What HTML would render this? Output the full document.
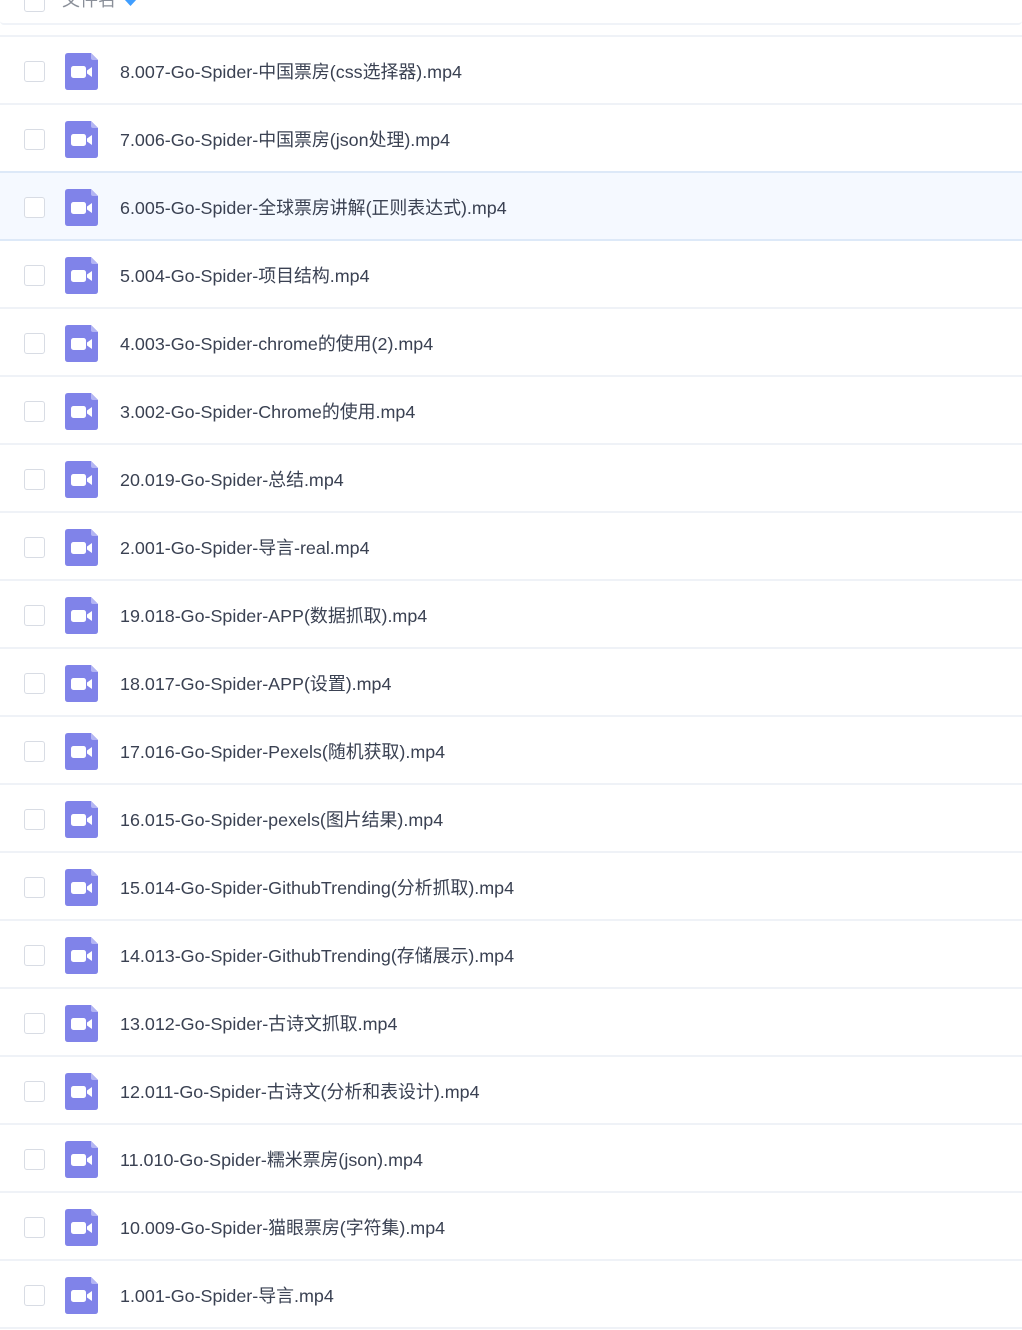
<!DOCTYPE html>
<html><head><meta charset="utf-8"><style>
*{margin:0;padding:0;box-sizing:border-box}
body{width:1022px;height:1330px;background:#fff;position:relative;overflow:hidden;font-family:"Liberation Sans","Noto Sans CJK SC",sans-serif}
.hdr{position:absolute;left:0;top:-40px;width:1022px;height:65px;background:#fff;border-bottom:2px solid #f0f3f8;border-radius:0 0 4px 4px}
.line{position:absolute;left:0;width:1022px;height:2px;background:#f1f4f9}
.row{position:absolute;left:0;width:1022px;height:68px}
.hl{background:#f5f9ff}
.cb{position:absolute;left:24px;top:25px;width:21px;height:21px;border:1.5px solid #d8dce4;border-radius:3px;background:#fff}
.ic{position:absolute;left:65px;top:17px}
.tx{position:absolute;left:120px;top:24px;font-size:17.9px;color:#3a4152;line-height:24px;white-space:nowrap}
</style></head><body>
<div class="hdr"><div class="cb" style="top:31px"></div><div style="position:absolute;left:62px;top:26px;font-size:18px;color:#8a8f99">文件名</div><svg style="position:absolute;left:124px;top:39px" width="13" height="7"><path d="M0 0H13L6.5 7Z" fill="#409eff"/></svg></div>
<div id="c"></div>
<script>
const n=["8.007-Go-Spider-中国票房(css选择器).mp4","7.006-Go-Spider-中国票房(json处理).mp4","6.005-Go-Spider-全球票房讲解(正则表达式).mp4","5.004-Go-Spider-项目结构.mp4","4.003-Go-Spider-chrome的使用(2).mp4","3.002-Go-Spider-Chrome的使用.mp4","20.019-Go-Spider-总结.mp4","2.001-Go-Spider-导言-real.mp4","19.018-Go-Spider-APP(数据抓取).mp4","18.017-Go-Spider-APP(设置).mp4","17.016-Go-Spider-Pexels(随机获取).mp4","16.015-Go-Spider-pexels(图片结果).mp4","15.014-Go-Spider-GithubTrending(分析抓取).mp4","14.013-Go-Spider-GithubTrending(存储展示).mp4","13.012-Go-Spider-古诗文抓取.mp4","12.011-Go-Spider-古诗文(分析和表设计).mp4","11.010-Go-Spider-糯米票房(json).mp4","10.009-Go-Spider-猫眼票房(字符集).mp4","1.001-Go-Spider-导言.mp4"];
const icon='<svg class="ic" width="33" height="37" viewBox="0 0 33 37"><path d="M3 0H26L33 7V34Q33 37 30 37H3Q0 37 0 34V3Q0 0 3 0Z" fill="#8083e9"/><path d="M26 0V5Q26 7 28 7H33Z" fill="#b3b5f3"/><rect x="6" y="13" width="15" height="12" rx="2.5" fill="#fff"/><path d="M22 17.5L27 14V24L22 20.5Z" fill="#fff"/></svg>';
let h='';
n.forEach((t,i)=>{const y=36+68*i;
h+=`<div class="row${i==2?' hl':''}" style="top:${y}px"><div class="cb"></div>${icon}<div class="tx">${t}</div></div>`;});
for(let k=0;k<=19;k++){const c=(k==2||k==3)?'#dde9f8':'#eff2f7';h+=`<div class="line" style="top:${35+68*k}px;background:${c}"></div>`;}
document.getElementById('c').innerHTML=h;
</script>
</body></html>
